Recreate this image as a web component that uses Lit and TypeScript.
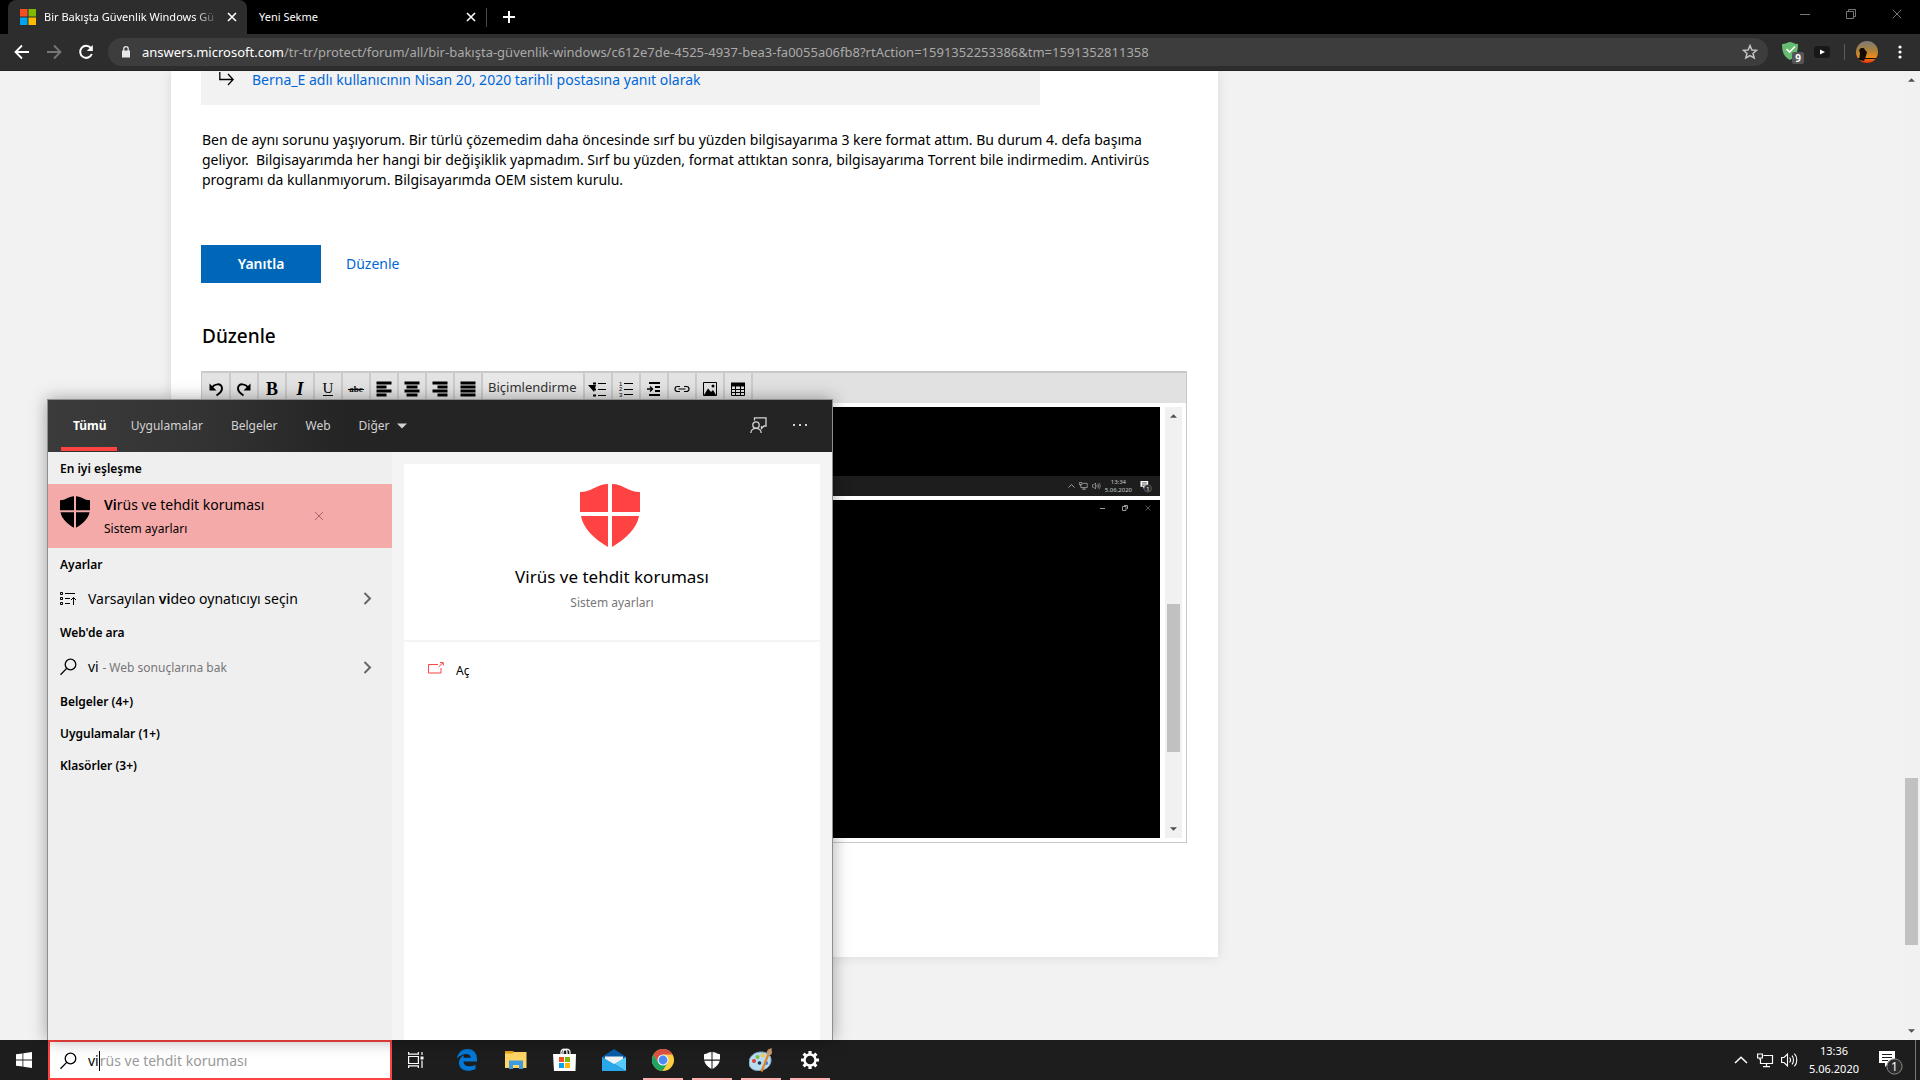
import { LitElement, html, css, svg } from "lit";
import { customElement } from "lit/decorators.js";

const shieldPath = svg`
  <path d="M0 8C12 8 17 0 28 0V28H0ZM32 0C43 0 48 8 60 8V28H32ZM1 32H28V63C14 55 3 44 1 32ZM32 32H59C57 44 46 55 32 63Z" fill="currentColor"/>`;

const shield = (cls: string) =>
  html`<svg class=${cls} viewBox="0 0 60 63" aria-hidden="true">${shieldPath}</svg>`;

const closeIcon = (cls: string, size = 10) =>
  html`<svg class=${cls} width=${size} height=${size} viewBox="0 0 10 10" fill="none" stroke="currentColor" aria-hidden="true">
    <path d="M.8.8 9.2 9.2M9.2.8.8 9.2"/>
  </svg>`;

const magnifier = html`<svg width="18" height="18" viewBox="0 0 18 18" fill="none" stroke="currentColor" stroke-width="1.3" aria-hidden="true">
  <circle cx="10.500" cy="6.500" r="5.300"/><path d="M6.700 10.400 .5 16.800"/>
</svg>`;

const chevron = html`<svg width="9" height="13" viewBox="0 0 9 13" fill="none" stroke="#666" stroke-width="2" aria-hidden="true">
  <path d="M1.500 1 7 6.500 1.500 12"/>
</svg>`;

const trayIcons = html`
  <svg class="tray-up" viewBox="0 0 14 8" fill="none" stroke="currentColor" stroke-width="1.5"><path d="M1 7 7 1.2 13 7"/></svg>
  <svg class="tray-net" viewBox="0 0 17 15" fill="none" stroke="currentColor" stroke-width="1.2">
    <path d="M6.500 2.500H15.500V10.500H3.500V6M9.500 10.500V13.500M6 13.600H13"/><path d="M.6 1H5.400V5H.6ZM3 5V7" />
  </svg>
  <svg class="tray-vol" viewBox="0 0 17 16" fill="none" stroke="currentColor" stroke-width="1.1">
    <path d="M.6 5.500H3L6.500 2V14L3 10.500H.6ZM8.500 5.600C9.800 7 9.800 9 8.500 10.400M11 3.700C13 6 13 10 11 12.300M13.400 1.700C16.600 5 16.600 11 13.400 14.300"/>
  </svg>`;

const noteIcon = html`<svg class="note" viewBox="0 0 25 25" aria-hidden="true">
  <path d="M1 1H17V13H11L7 17V13H1Z" fill="#fff"/><path d="M4 4.500H14M4 7.500H14M4 10.500H10" stroke="#1d1d1d" stroke-width="1.200"/>
  <circle cx="16.500" cy="16.500" r="7.600" fill="#2b2b2b" stroke="#8a8a8a"/>
  <text x="16.500" y="21" text-anchor="middle" font-size="12" fill="#fff">1</text>
</svg>`;

const bars = (rows: [number, number][]) =>
  svg`${rows.map(([x, w], i) => svg`<rect x=${x} y=${1 + i * 4} width=${w} height="2" fill="#000"/>`)}`;

const tool = (label: string, art: unknown) =>
  html`<button class="tool" aria-label=${label}><svg width="16" height="16" viewBox="0 0 16 16" fill="none" stroke="#000" aria-hidden="true">${art}</svg></button>`;

@customElement("browser-bar")
export class BrowserBar extends LitElement {
  static styles = css`
    :host { display: block; background: #000; color: #fff; font: 12px/16px "Noto Sans", "Open Sans", sans-serif; }
    * { box-sizing: border-box; }
    button { font: inherit; color: inherit; background: none; border: 0; padding: 0; display: flex; align-items: center; justify-content: center; }
    svg { display: block; flex: none; }
    .strip { display: flex; height: 34px; padding-left: 8px; }
    .tab { display: flex; align-items: center; padding: 0 10px 0 12px; gap: 8px; width: 239px; height: 34px; }
    .tab.active { background: #2d2d2d; border-radius: 8px 8px 0 0; }
    .title { flex: 1; min-width: 0; white-space: nowrap; font-size: 11px; }
    .active .title { -webkit-mask-image: linear-gradient(90deg, #000 86%, transparent); mask-image: linear-gradient(90deg, #000 86%, transparent); }
    .rule { width: 1px; height: 19px; background: #4a4a4a; margin-top: 8px; }
    .new { width: 44px; height: 34px; }
    .window { margin-left: auto; display: flex; color: #777; height: 28px; }
    .window button { width: 46px; }
    .nav { display: flex; align-items: center; height: 37px; background: #2d2d2d; border-bottom: 1px solid #232323; padding: 0 15px 1px 14px; }
    .navs { display: flex; gap: 16px; width: 94px; }
    .dim { color: #777; }
    .box { flex: 1; min-width: 0; display: flex; align-items: center; height: 28px; border-radius: 14px; background: #3d3d3d; padding: 0 10px 0 12px; gap: 10px; }
    .url { flex: 1; min-width: 0; white-space: nowrap; overflow: hidden; font-size: 13px; line-height: 20px; color: #aaa; }
    .url b { font-weight: 400; color: #fff; }
    .ext { display: flex; align-items: center; margin-left: 14px; }
    .gap { margin-left: 10px; }
    .sep { width: 1px; height: 16px; background: #5c5c5c; margin: 0 11px 0 14px; }
    .more { margin-left: 16px; width: 11px; }
  `;

  render() {
    return html`
      <div class="strip" role="tablist">
        <div class="tab active" role="tab" aria-selected="true">
          <svg width="16" height="16" viewBox="0 0 16 16"><path fill="#f25022" d="M0 0h7.500v7.500H0z"/><path fill="#7fba00" d="M8.500 0H16v7.500H8.500z"/><path fill="#00a4ef" d="M0 8.500h7.500V16H0z"/><path fill="#ffb900" d="M8.500 8.500H16V16H8.500z"/></svg>
          <span class="title">Bir Bakışta Güvenlik Windows Gü</span>
          <button aria-label="Kapat"><svg width="10" height="10" viewBox="0 0 10 10" stroke="#fff" stroke-width="1.600"><path d="M1 1 9 9M9 1 1 9"/></svg></button>
        </div>
        <div class="tab" role="tab" aria-selected="false">
          <span class="title">Yeni Sekme</span>
          <button aria-label="Kapat"><svg width="10" height="10" viewBox="0 0 10 10" stroke="#fff" stroke-width="1.600"><path d="M1 1 9 9M9 1 1 9"/></svg></button>
        </div>
        <span class="rule"></span>
        <button class="new" aria-label="Yeni sekme aç"><svg width="14" height="14" viewBox="0 0 14 14" stroke="#fff" stroke-width="2"><path d="M7 1V13M1 7H13"/></svg></button>
        <div class="window">
          <button aria-label="Simge durumuna küçült"><svg width="10" height="10" viewBox="0 0 10 10" stroke="currentColor"><path d="M0 5.500H10"/></svg></button>
          <button aria-label="Önceki boyut"><svg width="10" height="10" viewBox="0 0 10 10" fill="none" stroke="currentColor"><path d="M.5 2.500H7.500V9.500H.5ZM2.500 2.500V.5H9.500V7.500H7.500"/></svg></button>
          <button aria-label="Pencereyi kapat">${closeIcon("", 10)}</button>
        </div>
      </div>
      <div class="nav">
        <div class="navs">
          <button aria-label="Geri"><svg width="16" height="16" viewBox="0 0 16 16" fill="none" stroke="#fff" stroke-width="1.800"><path d="M15 8H2M8 1.500 1.500 8 8 14.500"/></svg></button>
          <button class="dim" aria-label="İleri"><svg width="16" height="16" viewBox="0 0 16 16" fill="none" stroke="currentColor" stroke-width="1.800"><path d="M1 8H14M8 1.500 14.500 8 8 14.500"/></svg></button>
          <button aria-label="Yenile"><svg width="16" height="16" viewBox="0 0 16 16" fill="none" stroke="#fff" stroke-width="2"><path d="M13.800 10A6 6 0 1 1 12.800 4"/><path d="M14.800 1V7H8.800Z" fill="#fff" stroke="none"/></svg></button>
        </div>
        <div class="box">
          <svg width="12" height="14" viewBox="0 0 12 14"><path d="M2 5.500H10V12.500H2Z" fill="#e8e8e8"/><path d="M3.800 6V3.800A2.200 2.200 0 0 1 8.200 3.800V6" fill="none" stroke="#e8e8e8" stroke-width="1.300"/></svg>
          <span class="url"><b>answers.microsoft.com</b>/tr-tr/protect/forum/all/bir-bakışta-güvenlik-windows/c612e7de-4525-4937-bea3-fa0055a06fb8?rtAction=1591352253386&amp;tm=1591352811358</span>
          <button aria-label="Yer işareti"><svg width="16" height="16" viewBox="0 0 16 16" fill="none" stroke="#c4c4c4" stroke-width="1.500"><path d="M8 1.600 9.900 6 14.600 6.300 11 9.400 12.200 14 8 11.500 3.800 14 5 9.400 1.400 6.300 6.100 6Z"/></svg></button>
        </div>
        <div class="ext">
          <button aria-label="AdGuard"><svg width="22" height="24" viewBox="0 0 22 24">
            <path d="M0 4C4 4 6 2 8 2S12 4 16 4C16 12 14 17 8 20 2 17 0 12 0 4Z" fill="#68bc71"/><path d="M4.500 9 7.500 12 13 6.500" fill="none" stroke="#fff" stroke-width="1.600"/>
            <rect x="10" y="12" width="12" height="12" rx="2" fill="#555"/><text x="16" y="22" font-size="10" font-weight="700" fill="#fff" text-anchor="middle">9</text></svg></button>
          <button class="gap" aria-label="Oynatıcı"><svg width="16" height="12" viewBox="0 0 16 12"><rect width="16" height="12" rx="3" fill="#181818"/><path d="M6 3.500 11 6 6 8.500Z" fill="#fff"/></svg></button>
          <span class="sep"></span>
          <button aria-label="Profil"><svg width="22" height="22" viewBox="0 0 22 22">
            <defs><linearGradient id="sun" x2="0" y2="1"><stop stop-color="#7b7b79"/><stop offset=".4" stop-color="#a9813f"/><stop offset=".75" stop-color="#f08a18"/><stop offset="1" stop-color="#e0300c"/></linearGradient><clipPath id="round"><circle cx="11" cy="11" r="11"/></clipPath></defs>
            <g clip-path="url(#round)"><rect width="22" height="22" fill="url(#sun)"/><path d="M3 19 4 12 3 9 5 7 8 7 9 9 11 11 10 15 8 20ZM0 17H22V18H0Z" fill="#150b05"/></g></svg></button>
          <button class="more" aria-label="Menü"><svg width="4" height="14" viewBox="0 0 4 14" fill="#fff"><circle cx="2" cy="2" r="1.600"/><circle cx="2" cy="7" r="1.600"/><circle cx="2" cy="12" r="1.600"/></svg></button>
        </div>
      </div>`;
  }
}

@customElement("forum-page")
export class ForumPage extends LitElement {
  static styles = css`
    :host { display: grid; grid-template-columns: 171px minmax(0, 1047px) 1fr 17px; background: #f2f2f2; overflow: hidden; color: #000; font: 14px/20px "Noto Sans", "Open Sans", sans-serif; }
    * { box-sizing: border-box; }
    button, select { font: inherit; }
    svg { display: block; flex: none; }
    a { color: #0067d8; text-decoration: none; }
    .card { grid-column: 2; align-self: start; background: #fff; box-shadow: 0 0 12px rgba(0, 0, 0, 0.1); padding: 0 31px 114px 30px; }
    .quote { display: flex; gap: 18px; margin-right: 147px; height: 34px; padding-left: 18px; background: #f2f2f2; line-height: 18px; }
    p { margin: 25px 0 55px; white-space: pre-line; padding-left: 1px; }
    .actions { display: flex; align-items: center; gap: 25px; }
    .reply { width: 120px; height: 38px; border: 0; background: #0067b8; color: #fff; font-weight: 600; padding: 0; }
    h2 { font-size: 19px; line-height: 24px; font-weight: 500; margin: 41px 1px 23px; }
    .editor { border: 1px solid #c9c9c9; height: 472px; display: flex; flex-direction: column; }
    .tools { display: flex; height: 31px; background: #e1e1e1; border-top: 1px solid #c9c9c9; padding-left: 1px; }
    .tool { width: 28px; border: 0; border-right: 2px solid #cacaca; background: #e3e3e3; padding: 8px 0 0; display: flex; justify-content: center; align-items: flex-start; }
    .tool svg { overflow: visible; }
    .format { appearance: none; width: 102px; border: 0; border-right: 2px solid #cacaca; border-radius: 0; background: #e8e8e8; color: #333; padding: 0 0 2px 5px; font-size: 13px; }
    .glyph { font: 700 18px "Liberation Serif", serif; }
    .italic { font-style: italic; }
    .body { flex: 1; min-height: 0; display: flex; gap: 5px; padding: 4px; }
    .shots { flex: 1; min-width: 0; display: flex; flex-direction: column; gap: 4px; }
    .shot { background: #000; height: 89px; display: flex; align-items: flex-end; }
    .shot.tall { flex: 1; align-items: flex-start; justify-content: flex-end; gap: 17px; padding: 5px 9px; color: #999; }
    .mini { flex: 1; height: 20px; background: #1d1d1d; color: #ccc; display: flex; align-items: center; justify-content: flex-end; gap: 4px; padding-right: 8px; font-size: 6px; line-height: 8px; text-align: center; }
    .mini .tray-up { width: 7px; height: 4px; }
    .mini .tray-net, .mini .tray-vol { width: 9px; height: 8px; }
    .mini .note { width: 12px; height: 13px; margin-left: 4px; }
    .bar { width: 17px; background: #f1f1f1; display: flex; flex-direction: column; align-items: center; padding: 6px 0; }
    .page-bar { grid-column: 4; }
    .thumb { width: 13px; background: #c1c1c1; }
    .inner .thumb { height: 148px; margin-top: 185px; }
    .page-bar .thumb { height: 167px; margin-top: 695px; }
    .arrow { width: 7px; height: 4px; margin: 1px 0; }
    .down { margin-top: auto; }
  `;

  private scroll(cls: string) {
    return html`<div class="bar ${cls}" aria-hidden="true">
      <svg class="arrow" viewBox="0 0 8 4"><path d="M0 4 4 0 8 4Z" fill="#505050"/></svg>
      <span class="thumb"></span>
      <svg class="arrow down" viewBox="0 0 8 4"><path d="M0 0 4 4 8 0Z" fill="#505050"/></svg>
    </div>`;
  }

  render() {
    const curve = svg`<path d="M3.500 7.500C6 2.500 14 1.500 14 7.500C14 10.500 11.500 12.500 8.500 14.500" stroke-width="2"/><path d="M1.500 2.500V9.500H8.500Z" fill="#000" stroke="none"/>`;
    return html`
      <main class="card">
        <div class="quote">
          <svg width="15" height="16" viewBox="0 0 15 16" fill="none" stroke="#000" stroke-width="1.300"><path d="M.8 1V8.500H14M9 3 14.200 8.500 9 14"/></svg>
          <a href="#post">Berna_E adlı kullanıcının Nisan 20, 2020 tarihli postasına yanıt olarak</a>
        </div>
        <p>Ben de aynı sorunu yaşıyorum. Bir türlü çözemedim daha öncesinde sırf bu yüzden bilgisayarıma 3 kere format attım. Bu durum 4. defa başıma
geliyor. &nbsp;Bilgisayarımda her hangi bir değişiklik yapmadım. Sırf bu yüzden, format attıktan sonra, bilgisayarıma Torrent bile indirmedim. Antivirüs
programı da kullanmıyorum. Bilgisayarımda OEM sistem kurulu.</p>
        <div class="actions"><button class="reply">Yanıtla</button><a href="#edit">Düzenle</a></div>
        <h2>Düzenle</h2>
        <section class="editor" aria-label="Düzenleyici">
          <div class="tools">
            ${tool("Geri al", curve)}
            ${tool("Yinele", svg`<g transform="matrix(-1 0 0 1 16 0)">${curve}</g>`)}
            ${tool("Kalın", svg`<text class="glyph" x="8" y="14" text-anchor="middle" fill="#000" stroke="none">B</text>`)}
            ${tool("İtalik", svg`<text class="glyph italic" x="8" y="14" text-anchor="middle" fill="#000" stroke="none">I</text>`)}
            ${tool("Altı çizili", svg`<text x="8" y="12" text-anchor="middle" font-family="Liberation Serif" font-size="15" fill="#000" stroke="none">U</text><path d="M3 14.500H13"/>`)}
            ${tool("Üstü çizili", svg`<text x="8" y="11" text-anchor="middle" font-family="Liberation Serif" font-size="9" font-weight="700" fill="#000" stroke="none">abc</text><path d="M0 8.500H16"/>`)}
            ${tool("Sola hizala", bars([[1, 14], [1, 9], [1, 14], [1, 9]]))}
            ${tool("Ortala", bars([[1, 14], [3, 10], [1, 14], [3, 10]]))}
            ${tool("Sağa hizala", bars([[1, 14], [6, 9], [1, 14], [6, 9]]))}
            ${tool("İki yana yasla", bars([[1, 14], [1, 14], [1, 14], [1, 14]]))}
            <select class="format" aria-label="Biçimlendirme"><option>Biçimlendirme</option></select>
            ${tool("Madde işaretleri", svg`<path d="M8 2.500H16M8 8.500H16M8 14.500H16"/><path d="M3 2.500H6M4 8.500H6M3 14.500H6" stroke-width="2"/><path d="M-2 4H6L4 11Z" fill="#000" stroke="none"/>`)}
            ${tool("Numaralandırma", svg`<path d="M6 2.500H15M6 8.500H15M6 13.500H15"/><g font-size="6" fill="#000" stroke="none" font-family="Liberation Sans"><text x="1" y="5">1</text><text x="1" y="10">2</text><text x="1" y="16">3</text></g>`)}
            ${tool("Girinti", svg`<path d="M3 2H14M9 6H14M9 10H14M3 14H14" stroke-width="2"/><path d="M1 8H6M4 5.500 6.500 8 4 10.500" stroke-width="1.400"/>`)}
            ${tool("Bağlantı", svg`<path d="M6 5.500H3.500A2.500 2.500 0 0 0 3.500 10.500H6M10 5.500H12.500A2.500 2.500 0 0 1 12.500 10.500H10M4.500 8H11.500" stroke-width="1.200"/>`)}
            ${tool("Resim", svg`<path d="M1.500 1.500H14.500V14.500H1.500Z"/><circle cx="11" cy="5" r="1.500" fill="#000" stroke="none"/><path d="M2 14 6 7.500 9 11 11 9 14 14Z" fill="#000" stroke="none"/>`)}
            ${tool("Tablo", svg`<path d="M1.500 2V14.500H14.500V2M1.500 8.500H14.500M1.500 11.500H14.500M5.500 3V14M10.500 3V14"/><path d="M1 3.500H15" stroke-width="4"/>`)}
          </div>
          <div class="body">
            <div class="shots">
              <div class="shot"><div class="mini">${trayIcons}<span>13:34<br />5.06.2020</span>${noteIcon}</div></div>
              <div class="shot tall">
                <svg width="5" height="6" viewBox="0 0 5 6" stroke="currentColor"><path d="M0 3.500H5"/></svg>
                <svg width="6" height="6" viewBox="0 0 6 6" fill="none" stroke="currentColor"><path d="M.5 1.500H4V5.500H.5ZM2 .5H5.500V4"/></svg>
                ${closeIcon("", 6)}
              </div>
            </div>
            ${this.scroll("inner")}
          </div>
        </section>
      </main>
      ${this.scroll("page-bar")}`;
  }
}

@customElement("search-flyout")
export class SearchFlyout extends LitElement {
  static styles = css`
    :host { display: flex; flex-direction: column; border: 1px solid #8f8f8f; border-bottom: 0; box-shadow: 0 0 16px rgba(0, 0, 0, 0.35); background: #f4f4f4; color: #000; font: 12px/16px "Noto Sans", "Open Sans", sans-serif; box-sizing: border-box; }
    * { box-sizing: border-box; }
    button { font: inherit; color: inherit; background: none; border: 0; padding: 0; text-align: left; }
    svg { display: block; flex: none; }
    header { display: flex; height: 52px; padding: 0 24px 0 13px; color: #d2d2d2; background: linear-gradient(90deg, #3b3b3b, #333 20%, #242424 38%, #242424); }
    .tabs { display: flex; flex: 1; }
    .tab { padding: 0 14px; display: flex; align-items: center; gap: 7px; }
    .tab.on { color: #fff; font-weight: 700; padding: 0 10px 0 12px; box-shadow: inset 0 -1px #303030, inset 0 -5px #ff4343; }
    .icons { display: flex; align-items: center; gap: 25px; padding-bottom: 2px; }
    .cols { flex: 1; display: flex; min-height: 0; }
    .left { width: 344px; background: #efefef; }
    h3 { font-size: 12px; line-height: 16px; font-weight: 600; margin: 0; padding: 9px 12px 7px; }
    .best { display: flex; align-items: flex-start; width: 100%; height: 64px; background: #f5aaaa; padding: 11px 68px 0 12px; gap: 14px; }
    .best .label { flex: 1; }
    .big { display: block; font-size: 14px; line-height: 20px; }
    .big b, .row b { font-weight: 600; }
    .sub { display: block; line-height: 16px; margin-top: 6px; }
    .best .dismiss { margin-top: 16px; color: #a66; }
    .s30 { width: 30px; height: 32px; margin-top: 1px; }
    .row { display: flex; align-items: center; width: 100%; height: 36px; padding: 1px 20px 0 12px; }
    .row.web { height: 37px; }
    .row .ico { width: 28px; }
    .row .text { flex: 1; font-size: 14px; line-height: 20px; }
    .grey { color: #777; font-size: 12px; }
    .right { flex: 1; display: flex; flex-direction: column; gap: 2px; padding: 12px 12px 0; }
    .hero { height: 176px; background: #fff; display: flex; flex-direction: column; align-items: center; padding-top: 20px; }
    .s60 { width: 60px; height: 63px; color: #ff4343; margin-right: 4px; }
    .name { font-size: 17px; line-height: 24px; margin-top: 18px; }
    .kind { color: #777; margin-top: 6px; }
    .acts { flex: 1; background: #fff; padding: 20px 24px; }
    .act { display: flex; align-items: flex-start; gap: 12px; line-height: 18px; }
  `;

  private row(cls: string, icon: unknown, text: unknown) {
    return html`<button class="row ${cls}"><span class="ico">${icon}</span><span class="text">${text}</span>${chevron}</button>`;
  }

  render() {
    return html`
      <header>
        <div class="tabs">
          <button class="tab on">Tümü</button>
          <button class="tab">Uygulamalar</button>
          <button class="tab">Belgeler</button>
          <button class="tab">Web</button>
          <button class="tab">Diğer <svg width="10" height="6" viewBox="0 0 10 6"><path d="M0 .5H10L5 5.500Z" fill="currentColor"/></svg></button>
        </div>
        <div class="icons">
          <button aria-label="Geri bildirim"><svg width="17" height="17" viewBox="0 0 17 17" fill="none" stroke="currentColor" stroke-width="1.300"><circle cx="6" cy="8" r="3.200"/><path d="M.8 16C1 9.800 11 9.800 11.200 16M4.500 3.500V.8H16V9H14L11.500 11.500V9"/></svg></button>
          <button aria-label="Seçenekler"><svg width="16" height="4" viewBox="0 0 16 4" fill="currentColor"><path d="M1 1h2v2H1zM7 1h2v2H7zM13 1h2v2h-2z"/></svg></button>
        </div>
      </header>
      <div class="cols">
        <div class="left">
          <h3>En iyi eşleşme</h3>
          <button class="best">${shield("s30")}<span class="label"><span class="big"><b>Vi</b>rüs ve tehdit koruması</span><span class="sub">Sistem ayarları</span></span>${closeIcon("dismiss", 10)}</button>
          <h3>Ayarlar</h3>
          ${this.row("", html`<svg width="17" height="14" viewBox="0 0 17 14" fill="none" stroke="#000"><path d="M.5.500H2.500V2.500H.5ZM.5 5.500H2.500V7.500H.5ZM.5 10.500H2.500V12.500H.5ZM5 1.500H15M5 6.500H10M5 11.500H10M13.500 13V5.500M11 8 13.500 5.500 16 8"/></svg>`, html`Varsayılan <b>vi</b>deo oynatıcıyı seçin`)}
          <h3>Web'de ara</h3>
          ${this.row("web", magnifier, html`vi <span class="grey">- Web sonuçlarına bak</span>`)}
          <h3>Belgeler (4+)</h3>
          <h3>Uygulamalar (1+)</h3>
          <h3>Klasörler (3+)</h3>
        </div>
        <div class="right">
          <div class="hero">${shield("s60")}<span class="name">Virüs ve tehdit koruması</span><span class="kind">Sistem ayarları</span></div>
          <div class="acts"><button class="act"><svg width="16" height="12" viewBox="0 0 16 12" fill="none" stroke="#ff4343"><path d="M10 2.500H.5V11H13V6M10.500 5 15 .800M12 .600H15.300V3.500"/></svg>Aç</button></div>
        </div>
      </div>`;
  }
}

@customElement("task-bar")
export class TaskBar extends LitElement {
  static styles = css`
    :host { display: flex; height: 40px; background: #1d1d1d; color: #fff; font: 11px/18px "Noto Sans", "Open Sans", sans-serif; }
    * { box-sizing: border-box; }
    button { font: inherit; color: inherit; background: none; border: 0; padding: 0; display: flex; align-items: center; justify-content: center; }
    svg { display: block; flex: none; }
    .start { width: 48px; }
    .search { display: flex; align-items: center; width: 344px; border: 2px solid #ff4343; background: #fff; color: #000; padding: 2px 10px 0; font-size: 14px; line-height: 20px; }
    .search svg { margin-right: 10px; }
    .search input { field-sizing: content; width: 11px; border: 0; outline: 0; padding: 0; font: inherit; background: none; }
    @supports (field-sizing: content) { .search input { width: auto; } }
    .caret { width: 1px; height: 20px; background: #000; }
    .ghost { color: #999; white-space: nowrap; }
    .apps { display: flex; gap: 9px; padding-left: 4px; flex: 1; }
    .app { width: 40px; }
    .app:first-child { margin-right: 2px; }
    .app.open { box-shadow: inset 0 -2px #ffb0b0; }
    .tray { display: flex; align-items: center; }
    .tray-up { width: 14px; height: 8px; margin-right: 9px; }
    .tray-net { width: 17px; height: 15px; margin-right: 7px; }
    .tray-vol { width: 17px; height: 16px; }
    .clock { text-align: center; margin: 0 19px 0 11px; padding-bottom: 1px; }
    .note { width: 25px; height: 25px; margin-top: 4px; }
    .show { width: 5px; border-left: 1px solid #777; height: 40px; margin-left: 12px; }
  `;

  private app(label: string, open: boolean, art: unknown, w = 24, h = 24) {
    return html`<button class="app ${open ? "open" : ""}" aria-label=${label}><svg width=${w} height=${h} viewBox="0 0 ${w} ${h}" aria-hidden="true">${art}</svg></button>`;
  }

  render() {
    return html`
      <button class="start" aria-label="Başlat"><svg width="16" height="16" viewBox="0 0 16 16" fill="#fff"><path d="M0 2.300 6.500 1.400V7.600H0ZM7.300 1.300 16 0V7.600H7.300ZM0 8.400H6.500V14.600L0 13.700ZM7.300 8.400H16V16L7.300 14.700Z"/></svg></button>
      <label class="search">${magnifier}<input aria-label="Arama" value="vi" /><span class="caret"></span><span class="ghost">rüs ve tehdit koruması</span></label>
      <div class="apps">
        ${this.app("Görev görünümü", false, svg`<g fill="none" stroke="#fff" stroke-width="1.200"><path d="M.6 4.500H10.400V11.500H.6ZM.6 0V2.200H10.400V0M.6 16V13.800H10.400V16M14 0V3M14 8.500V16"/></g><rect x="12.500" y="4.500" width="3" height="3" fill="#fff"/>`, 16, 16)}
        ${this.app("Edge", false, svg`<path d="M2 10.500C3 4 7.500 1 12.500 1C19 1 22 5.500 22 11V13.500H8.500C8.700 19 15.500 19.500 20.500 16.700V21C13 25 3.600 22 4 14.500C4.200 10.500 6.700 8.200 9 7.300C8.600 8.300 8.500 9 8.500 9.800H15.800C15.800 4.500 7.500 4.500 2 10.500Z" fill="#0078d7"/>`)}
        ${this.app("Dosya Gezgini", false, svg`<path d="M1 3H9L11 5H22V20H1Z" fill="#e8a317"/><path d="M1 5.500H8L10 4H22.500V20H1Z" fill="#ffd566"/><path d="M5 12.500H19V21H15V17H9V21H5Z" fill="#3f9be0"/>`)}
        ${this.app("Store", false, svg`<g fill="none" stroke="#fff" stroke-width="1.300"><path d="M8 6V4.500C8 0 14 0 14 4.500V6M10 6V4.500C10 0 17 0 17 4.500V6"/></g><path d="M0 6H23L22.500 23H1Z" fill="#fff"/><path d="M6 9h5v5H6z" fill="#f25022"/><path d="M12 9h5v5h-5z" fill="#7fba00"/><path d="M6 15h5v5H6z" fill="#00a4ef"/><path d="M12 15h5v5h-5z" fill="#ffb900"/>`)}
        ${this.app("Posta", false, svg`<path d="M0 9 12 1 24 9V12H0Z" fill="#0a5ca8"/><path d="M3 8.500H21V16H3Z" fill="#f2f2f2"/><path d="M0 9 12 16 24 23H0Z" fill="#28a8ea"/><path d="M24 9 12 16 24 23Z" fill="#54cdfa"/>`)}
        ${this.app("Chrome", true, svg`<circle cx="12" cy="12" r="11" fill="#ffcd40"/><path d="M12 6.500H21.500A11 11 0 0 0 2.500 6.500L7.200 14.700Z" fill="#dd5144"/><path d="M2.500 6.500A11 11 0 0 0 11.500 23L16.700 14.700 12 17 7.200 14.700Z" fill="#1da462"/><circle cx="12" cy="12" r="5.500" fill="#f1f1f1"/><circle cx="12" cy="12" r="4.400" fill="#4c8bf5"/>`)}
        <button class="app open" aria-label="Windows Güvenliği"><svg width="16" height="17" viewBox="0 0 60 63">${shieldPath}</svg></button>
        ${this.app("Paint", true, svg`<path d="M12 4C5 4 0 9 0 14.500C0 20 4 22.500 9 22.500C17 22.500 22 18 22 12C22 7 18 4 12 4Z" fill="#b8dcf0" stroke="#7fa9c4"/><circle cx="5" cy="13" r="2" fill="#d8423d"/><circle cx="8.500" cy="9" r="2" fill="#7ac143"/><circle cx="14" cy="7.500" r="2" fill="#ffc83d"/><circle cx="10.500" cy="15" r="1.800" fill="#16344e"/><circle cx="17" cy="15" r="2" fill="#3b78d8"/><path d="M12.500 23.500 19.500 6" stroke="#e0862a" stroke-width="2.200"/><path d="M18 6.500C17 3 19 1 22.500 0L23 5C22.500 7 20.500 8 18 6.500Z" fill="#c99b6d"/>`)}
        ${this.app("Ayarlar", true, svg`<circle cx="10" cy="10" r="5.500" fill="none" stroke="#fff" stroke-width="2.400"/><path d="M10 1V4.500M10 15.500V19M1 10H4.500M15.500 10H19M3.600 3.600 6.100 6.100M13.900 13.900 16.400 16.400M16.400 3.600 13.900 6.100M6.100 13.900 3.600 16.400" stroke="#fff" stroke-width="3.200"/>`, 20, 20)}
      </div>
      <div class="tray">${trayIcons}<div class="clock">13:36<br />5.06.2020</div>${noteIcon}<span class="show"></span></div>`;
  }
}

@customElement("app-root")
export class AppRoot extends LitElement {
  static styles = css`
    :host { display: grid; grid-template-rows: auto minmax(0, 1fr) auto; height: 100vh; position: relative; overflow: hidden; }
    .flyout { position: absolute; left: 47px; bottom: 40px; width: 786px; height: 641px; }
  `;

  render() {
    return html`
      <browser-bar></browser-bar>
      <forum-page></forum-page>
      <task-bar></task-bar>
      <search-flyout class="flyout"></search-flyout>`;
  }
}
